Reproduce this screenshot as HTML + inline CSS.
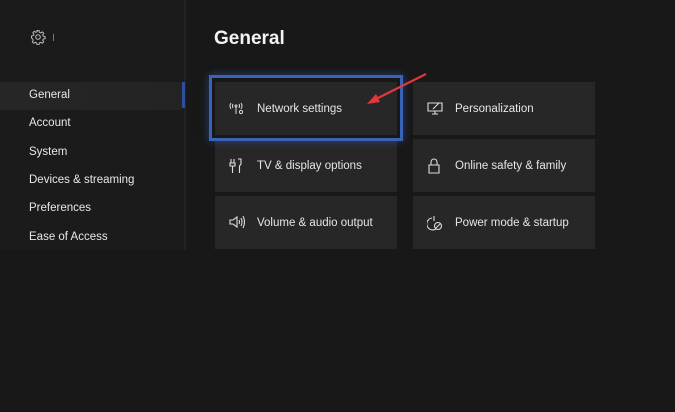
<!DOCTYPE html><html><head><style>
body{margin:0;width:675px;height:412px;background:#181818;font-family:"Liberation Sans",sans-serif;color:#e6e6e6;position:relative;overflow:hidden}
.side{position:absolute;left:0;top:0;width:184px;height:250px;background:#1b1b1b;border-right:2px solid #222}
.nav{position:absolute;left:29px;font-size:11.5px;color:#e8e8e8}
.sel{position:absolute;left:0;top:82px;width:182px;height:28px;background:linear-gradient(90deg,#262626,#232323)}
.bar{position:absolute;left:182px;top:82px;width:3px;height:26px;background:#2f4f9a}
h1{position:absolute;left:214px;top:28px;margin:0;font-size:19px;font-weight:bold;color:#f2f2f2}
.t{position:absolute;width:182px;height:53px;background:#272727;font-size:11.5px}
.t span{position:absolute;left:42px;top:21px}
.t svg{position:absolute;left:14px;top:19px}
.hl{position:absolute;left:209px;top:75px;width:188px;height:60px;border:3px solid #3a62b6;box-shadow:0 0 8px rgba(60,100,200,.5)}
</style></head><body>
<div class="side"></div>
<svg style="position:absolute;left:30px;top:29px" width="16" height="16" viewBox="0 0 16 16" fill="none" stroke="#bbb" stroke-width="1"><circle cx="8" cy="8" r="2.3"/><path d="M7 1.5h2l.4 1.8 1.3.6 1.6-1 1.4 1.4-1 1.6.6 1.3 1.8.4v2l-1.8.4-.6 1.3 1 1.6-1.4 1.4-1.6-1-1.3.6-.4 1.8H7l-.4-1.8-1.3-.6-1.6 1-1.4-1.4 1-1.6-.6-1.3L1.5 9V7l1.8-.4.6-1.3-1-1.6 1.4-1.4 1.6 1 1.3-.6z"/></svg>
<div style="position:absolute;left:53px;top:34px;width:1px;height:7px;background:#777"></div>
<div class="sel"></div><div class="bar"></div>
<div class="nav" style="top:89px">General</div>
<div class="nav" style="top:117px">Account</div>
<div class="nav" style="top:146px">System</div>
<div class="nav" style="top:174px">Devices &amp; streaming</div>
<div class="nav" style="top:202px">Preferences</div>
<div class="nav" style="top:231px">Ease of Access</div>
<h1>General</h1>
<div class="t" style="left:215px;top:82px"><svg width="16" height="14" viewBox="0 0 16 14" fill="none" stroke="#ddd" stroke-width="1"><path d="M2 2q-2 3 0 6M4 3q-1 2 0 4M10 3q1 2 0 4M12 2q2 3 0 6"/><circle cx="7" cy="5" r="1"/><path d="M7 6v7"/><circle cx="12" cy="11" r="1.6"/></svg><span>Network settings</span></div>
<div class="t" style="left:215px;top:139px"><svg width="14" height="16" viewBox="0 0 14 16" fill="none" stroke="#ddd" stroke-width="1.1"><path d="M2 1v4M5 1v4M1 5h5v3H1zM3.5 8v7M9 1h3v5l-1.5 2v7"/></svg><span>TV &amp; display options</span></div>
<div class="t" style="left:215px;top:196px"><svg width="16" height="14" viewBox="0 0 16 14" fill="none" stroke="#ddd" stroke-width="1.1"><path d="M1 5h3l4-3v10l-4-3H1zM10 5q1 2 0 4M12 3q2 4 0 8M14 1q3 6 0 12"/></svg><span>Volume &amp; audio output</span></div>
<div class="t" style="left:413px;top:82px"><svg width="16" height="14" viewBox="0 0 16 14" fill="none" stroke="#ddd" stroke-width="1.1"><path d="M1 2h14v8H1zM5 13h6M8 10v3M6 8l6-6"/></svg><span>Personalization</span></div>
<div class="t" style="left:413px;top:139px"><svg width="14" height="16" viewBox="0 0 14 16" fill="none" stroke="#ddd" stroke-width="1.1"><path d="M2 7h10v8H2zM4 7V4a3 3 0 016 0v3"/></svg><span>Online safety &amp; family</span></div>
<div class="t" style="left:413px;top:196px"><svg width="16" height="16" viewBox="0 0 16 16" fill="none" stroke="#ddd" stroke-width="1.1"><path d="M5 3a6 6 0 104 11M7 1v5"/><circle cx="11" cy="11" r="3.5"/><path d="M9 13l4-4"/></svg><span>Power mode &amp; startup</span></div>
<div class="hl"></div>
<svg style="position:absolute;left:360px;top:70px" width="72" height="40"><path d="M66 4L14 30" stroke="#e0383e" stroke-width="2.2"/><path d="M7 34l13-2-4-8z" fill="#e0383e"/></svg>
</body></html>
